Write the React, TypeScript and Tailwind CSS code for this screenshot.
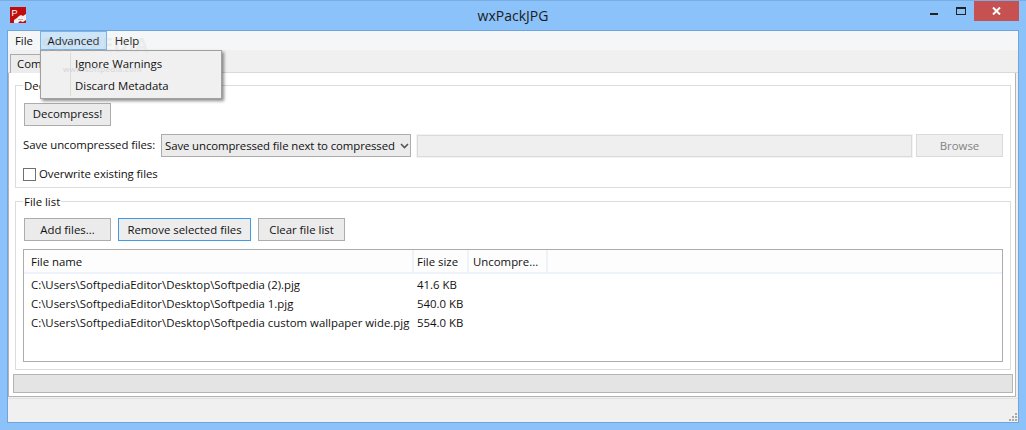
import React from "react";

const font = { fontFamily: '"Open Sans", "Noto Sans", sans-serif' };
const btn =
  "flex items-center justify-center h-[23px] border border-[#acacac] bg-[#ebebeb] text-[11.4px] leading-none text-[#111]";

function Logo() {
  return (
    <svg width="16" height="16" viewBox="0 0 16 16" className="shrink-0">
      <rect width="16" height="16" fill="#c00c0c" />
      <text x="1.5" y="9" fontSize="9" fontFamily="Liberation Sans, sans-serif" fill="#fff">P</text>
      <path d="M4 16 L4 13 L7 11 L9 9 L11 8 L13 9 L16 7 L16 13 L13 15 L10 14 L8 16 Z" fill="#f4eeee" />
      <path d="M8 12h5v1H8z" fill="#c9a5a5" />
    </svg>
  );
}

function Header({ w, pl, children }: { w: string; pl: string; children?: React.ReactNode }) {
  return <div className={`${w} ${pl} h-full flex items-center pt-[2px] border-r-2 border-[#eef3fb]`}>{children}</div>;
}

export default function App() {
  return (
    <div style={font} className="relative w-[1026px] h-[430px] overflow-hidden bg-[#8bc2fa] border-t border-[#78aee4] text-[11.4px] text-[#111] flex flex-col">
      {/* title bar */}
      <div className="h-[29px] shrink-0 flex items-start pl-[10px] relative">
        <div className="mt-[6px]"><Logo /></div>
        <div className="flex-1 text-center text-[14px] leading-[20px] pt-[5px] pl-[70px] text-[#1b1b1b]">wxPackJPG</div>
        <div className="flex items-start">
          <div className="w-[8px] h-[2px] bg-[#222] mt-[12px] mr-[18px]" />
          <div className="w-[10px] h-[8px] border border-[#222] border-t-2 mt-[6px] mr-[8px]" />
          <div className="w-[45px] h-[20px] bg-[#c75050] flex items-center justify-center mr-[7px]">
            <svg width="9" height="8" viewBox="0 0 9 8">
              <path d="M1 0.5 L8 7.5 M8 0.5 L1 7.5" stroke="#fff" strokeWidth="2" />
            </svg>
          </div>
        </div>
      </div>

      {/* client */}
      <div className="mx-[7px] h-[393px] shrink-0 border border-[#6fa5dc] flex flex-col bg-[#f0f0f0]">
        {/* menu bar */}
        <div className="h-[19px] shrink-0 bg-[#f5f6f7] flex items-stretch">
          <div className="w-[32px] flex items-center justify-center">File</div>
          <div className="w-[67px] flex items-center justify-center bg-[#cde5f9] border border-[#7db3e6]">Advanced</div>
          <div className="w-[40px] flex items-center justify-center">Help</div>
        </div>

        {/* tabs + panel */}
        <div className="flex-1 flex flex-col pt-[4px]">
          <div className="h-[19px] shrink-0 flex pl-[2px] border-b border-[#d9d9d9]">
            <div className="w-[72px] h-[19px] border border-[#acacac] border-b-0 bg-[#ececec] pl-[6px] flex items-center">Compress</div>
          </div>
          <div className="h-[324px] shrink-0 bg-white border-b border-r border-l border-[#b4b4b4] mr-[2px] flex flex-col px-[6px] pt-[4px]">
            <fieldset className="h-[111px] border border-[#dcdcdc] mr-[-1px] shrink-0">
              <legend className="ml-[7px] px-[1px] pt-[1px] h-[16px] leading-[16px]">Decompress</legend>
              <div className="pl-[8px] pt-[10px] pr-[7px] flex flex-col">
                <div className={`${btn} w-[87px] pb-[2px]`}>Decompress!</div>
                <div className="flex items-start mt-[8px] ml-[-1px]">
                  <div className="w-[138px] h-[22px] flex items-center whitespace-nowrap tracking-[-0.08px]">Save uncompressed files:</div>
                  <div className="w-[250px] h-[23px] border border-[#acacac] bg-[#ebebeb] flex items-center pl-[3px] justify-between whitespace-nowrap">
                    <span className="tracking-[-0.1px]">Save uncompressed file next to compressed</span>
                    <svg width="9" height="6" viewBox="0 0 9 6" className="mr-[1px]">
                      <path d="M1 1 L4.5 4.5 L8 1" fill="none" stroke="#555" strokeWidth="1.6" />
                    </svg>
                  </div>
                  <div className="ml-[5px] w-[497px] h-[24px] bg-[#f3f3f3] p-[1px]">
                    <div className="h-[22px] bg-[#efefef] border border-[#dadada]" />
                  </div>
                  <div className="ml-[3px] w-[87px] h-[23px] border border-[#dadada] bg-[#efefef] flex items-center justify-center text-[#838383]">Browse</div>
                </div>
                <div className="flex items-center mt-[9px] ml-[-1px] h-[14px]">
                  <div className="w-[13px] h-[13px] border border-[#707070] bg-white" />
                  <span className="ml-[3px] tracking-[-0.08px]">Overwrite existing files</span>
                </div>
              </div>
            </fieldset>

            <fieldset className="h-[177px] mt-[5px] border border-[#dcdcdc] mr-[-1px] shrink-0">
              <legend className="ml-[7px] px-[1px] pt-[1px] h-[16px] leading-[16px]">File list</legend>
              <div className="pl-[8px] pr-[7px] pt-[9px] flex flex-col">
                <div className="flex gap-[7px]">
                  <div className={`${btn} w-[87px]`}>Add files...</div>
                  <div className={`${btn} w-[133px] !border-[#3f9ae8] bg-[#ededed]`}>Remove selected files</div>
                  <div className={`${btn} w-[87px]`}>Clear file list</div>
                </div>
                <div className="mt-[8px] ml-[-1px] w-[980px] h-[113px] border border-[#acacac] bg-white flex flex-col">
                  <div className="h-[24px] shrink-0 flex border-b-2 border-[#eef3fb] bg-[#fdfdfd]">
                    <Header w="w-[390px]" pl="pl-[7px]">File name</Header>
                    <Header w="w-[55px]" pl="pl-[3px]">File size</Header>
                    <Header w="w-[79px]" pl="pl-[4px]">Uncompre...</Header>
                  </div>
                  <div className="flex flex-col pt-[1px]">
                    {[
                      ["C:\\Users\\SoftpediaEditor\\Desktop\\Softpedia (2).pjg", "41.6 KB"],
                      ["C:\\Users\\SoftpediaEditor\\Desktop\\Softpedia 1.pjg", "540.0 KB"],
                      ["C:\\Users\\SoftpediaEditor\\Desktop\\Softpedia custom wallpaper wide.pjg", "554.0 KB"],
                    ].map(([a, b]) => (
                      <div key={b} className="h-[19px] flex items-center">
                        <div className="w-[390px] pl-[7px] whitespace-nowrap">{a}</div>
                        <div className="pl-[3px]">{b}</div>
                      </div>
                    ))}
                  </div>
                </div>
              </div>
            </fieldset>

            <div className="mt-[4px] ml-[-2px] h-[19px] w-[1000px] shrink-0 border border-[#b4b4b4] bg-[#e4e4e4]" />
          </div>
          {/* status bar */}
          <div className="flex-1 border-t border-[#e2e2e2] mt-[1px] bg-[#f0f0f0] flex items-end justify-end pr-[1px] pb-[1px]">
            <svg width="8" height="8" viewBox="0 0 8 8">
              <path d="M6 0h2v2H6zM3 3h2v2H3zM6 3h2v2H6zM0 6h2v2H0zM3 6h2v2H3zM6 6h2v2H6z" fill="#a9a9a9" />
            </svg>
          </div>
        </div>
      </div>

      {/* dropdown menu */}
      <div className="absolute left-[40px] top-[49px] w-[182px] h-[49px] bg-[#f0f0f0] border border-[#a0a0a0] shadow-[2px_2px_3px_rgba(0,0,0,0.45)] flex flex-col py-[1px]">
        <div className="absolute left-[29px] top-[2px] bottom-[2px] w-px bg-[#dcdcdc]" />
        <div className="h-[23px] flex items-center pl-[34px]">Ignore Warnings</div>
        <div className="h-[23px] flex items-center pl-[34px]">Discard Metadata</div>
        <div className="absolute left-[22px] top-[12px] text-[8px] tracking-[0.3px] text-[#c8c8c8] opacity-70">www.softpedia.com</div>
      </div>
      {/* watermark */}
      <div className="absolute left-[41px] top-[32px] text-[19px] leading-[24px] font-bold tracking-[0.5px] text-[#c4c4c4] opacity-20 pointer-events-none">SOFTPEDIA</div>
    </div>
  );
}
